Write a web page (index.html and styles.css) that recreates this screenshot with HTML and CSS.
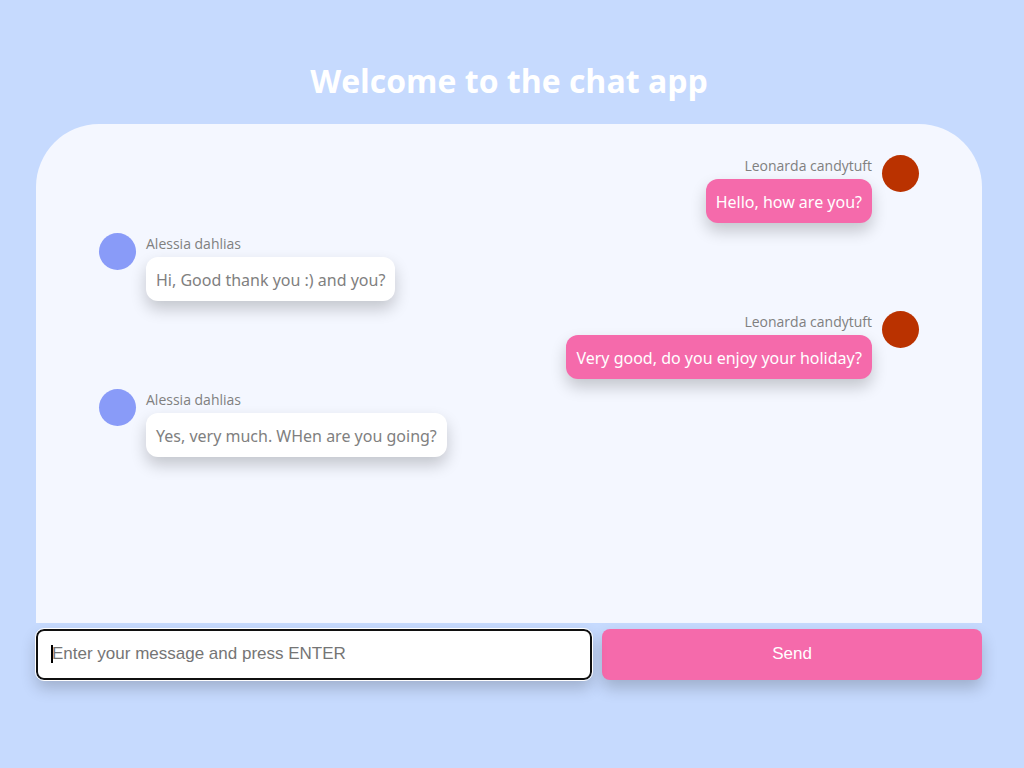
FILE: index.html
```html
<!DOCTYPE html>
<html lang="en">
<head>
<meta charset="utf-8">
<meta name="viewport" content="width=device-width, initial-scale=1">
<title>Chat app</title>
<link rel="stylesheet" href="styles.css">
</head>
<body>
<main class="app">
  <h1 class="title">Welcome to the chat app</h1>
  <section class="chat" aria-label="Messages">
    <article class="message message-own">
      <div class="avatar"></div>
      <div class="content">
        <span class="name">Leonarda candytuft</span>
        <p class="bubble">Hello, how are you?</p>
      </div>
    </article>
    <article class="message">
      <div class="avatar"></div>
      <div class="content">
        <span class="name">Alessia dahlias</span>
        <p class="bubble">Hi, Good thank you :) and you?</p>
      </div>
    </article>
    <article class="message message-own">
      <div class="avatar"></div>
      <div class="content">
        <span class="name">Leonarda candytuft</span>
        <p class="bubble">Very good, do you enjoy your holiday?</p>
      </div>
    </article>
    <article class="message">
      <div class="avatar"></div>
      <div class="content">
        <span class="name">Alessia dahlias</span>
        <p class="bubble">Yes, very much. WHen are you going?</p>
      </div>
    </article>
  </section>
  <form class="composer">
    <div class="field">
      <input class="input" type="text" aria-label="Message" placeholder="Enter your message and press ENTER">
      <span class="caret" aria-hidden="true"></span>
    </div>
    <button class="send" type="button">Send</button>
  </form>
</main>
</body>
</html>
```
FILE: styles.css
```css
* {
  box-sizing: border-box;
}

body {
  margin: 0;
  min-height: 100vh;
  background: #c6dafe;
  color: #808080;
  font-family: "Segoe UI", "Open Sans", "Noto Sans", sans-serif;
}

.app {
  display: flex;
  flex-direction: column;
  min-height: 100vh;
  padding: 60px 42px 88px 36px;
}

.title {
  margin: 0 0 22px;
  color: #fff;
  font-size: 32px;
  line-height: 42px;
  font-weight: 700;
  text-align: center;
}

.chat {
  flex: 1;
  display: flex;
  flex-direction: column;
  gap: 10px;
  padding: 31px 63px;
  background: #f4f7ff;
  border-radius: 63px 63px 0 0;
}

.message {
  display: flex;
  align-items: flex-start;
  gap: 10px;
}

.message-own {
  flex-direction: row-reverse;
}

.avatar {
  width: 37px;
  height: 37px;
  border-radius: 50%;
  background: #899bf8;
}

.message-own .avatar {
  background: #ba3200;
}

.content {
  display: flex;
  flex-direction: column;
  align-items: flex-start;
}

.message-own .content {
  align-items: flex-end;
}

.name {
  padding-bottom: 2px;
  font-size: 14px;
  line-height: 22px;
}

.bubble {
  margin: 0;
  padding: 11px 10px 9px;
  border-radius: 12px;
  background: #fff;
  box-shadow: 0 8px 16px rgba(0, 0, 0, 0.2);
  font-family: "Segoe UI", "Noto Sans", sans-serif;
  font-size: 16px;
  line-height: 24px;
}

.message-own .bubble {
  background: #f56aab;
  color: #fff;
}

.composer {
  display: grid;
  grid-template-columns: 556fr 380fr;
  gap: 10px;
  margin-top: 6px;
}

.field {
  position: relative;
}

.input,
.send {
  display: block;
  width: 100%;
  height: 51px;
  padding: 0 14px 2px;
  border-radius: 8px;
  box-shadow: 0 8px 16px rgba(0, 0, 0, 0.2);
  font-family: Arial, "Liberation Sans", sans-serif;
  font-size: 17px;
}

.input {
  border: 2px solid #101010;
  outline: 1px solid #fff;
  background: #fff;
}

.input::placeholder {
  color: #757575;
}

.caret {
  position: absolute;
  top: 16px;
  left: 15px;
  width: 2px;
  height: 18px;
  background: #000;
}

.send {
  border: 0;
  background: #f56aab;
  color: #fff;
  cursor: pointer;
}
```
